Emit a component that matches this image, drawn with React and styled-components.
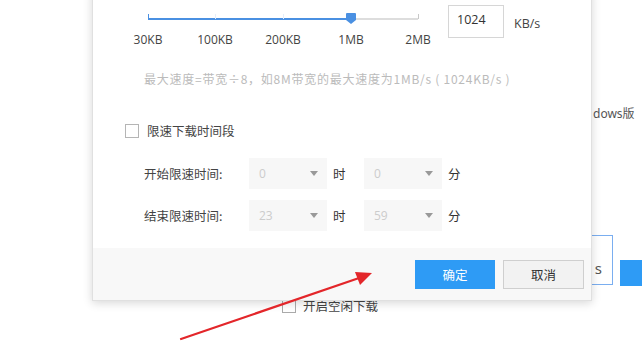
import React from "react";
import styled, { createGlobalStyle } from "styled-components";

const Global = createGlobalStyle`
  html, body { margin: 0; padding: 0; background: #fff; }
  body { width: 642px; height: 354px; overflow: hidden; font-family: "Noto Sans", "Noto Sans CJK SC", sans-serif; }
`;

const Page = styled.div`
  position: relative;
  width: 642px;
  height: 354px;
  background: #fff;
  overflow: hidden;
`;

const BgText = styled.div`
  position: absolute;
  left: ${(p) => p.x}px;
  top: ${(p) => p.y}px;
  font-size: 12px;
  color: #555;
  font-family: "Noto Sans", "Noto Sans CJK SC", sans-serif;
  white-space: nowrap;
`;

const BgBox = styled.div`
  position: absolute;
  left: 560px;
  top: 235px;
  width: 53px;
  height: 50px;
  border: 1px solid #7aaef0;
  box-sizing: border-box;
  display: flex;
  align-items: flex-end;
  justify-content: flex-end;
  padding: 0 10px 6px 0;
  font-size: 15px;
  color: #555;
`;

const BgButton = styled.div`
  position: absolute;
  left: 620px;
  top: 260px;
  width: 40px;
  height: 26px;
  background: #2e9bf5;
`;

const BgCheck = styled.div`
  position: absolute;
  left: 282px;
  top: 296px;
  display: flex;
  align-items: center;
  gap: 7px;
  font-size: 12.5px;
  color: #444;
  font-family: "Noto Sans CJK SC", sans-serif;
`;

const BgBox2 = styled.span`
  width: 12px;
  height: 12px;
  border: 1px solid #aaa;
  background: #fff;
`;

const Dialog = styled.div`
  position: absolute;
  left: 92px;
  top: -10px;
  width: 500px;
  height: 311px;
  background: #fff;
  border: 1px solid #e0e0e0;
  box-sizing: border-box;
  box-shadow: 0 2px 9px rgba(0, 0, 0, 0.16);
  display: flex;
  flex-direction: column;
  z-index: 2;
`;

const Body = styled.div`
  flex: 1;
  display: flex;
  flex-direction: column;
  padding: 14px 0 0 0;
`;

const SliderRow = styled.div`
  display: flex;
  align-items: flex-start;
  padding-left: 38px;
`;

const SliderWrap = styled.div`
  position: relative;
  width: 304px;
  height: 44px;
`;

const Track = styled.div`
  position: absolute;
  left: 17px;
  top: 13px;
  width: 270px;
  height: 2px;
  background: #ddd;
`;

const Fill = styled.div`
  position: absolute;
  left: 0;
  top: 0;
  height: 2px;
  background: #4a90e2;
`;

const Tick = styled.div`
  position: absolute;
  top: -4px;
  width: 1px;
  height: 5px;
  background: ${(p) => p.color};
`;

const Thumb = styled.svg`
  position: absolute;
  top: -6px;
  width: 12px;
  height: 13px;
  margin-left: -6px;
`;

const Label = styled.span`
  position: absolute;
  top: 26px;
  transform: translateX(-50%);
  font-size: 12px;
  color: #444;
  font-family: "Open Sans", "Noto Sans", sans-serif;
  white-space: nowrap;
`;

const NumInput = styled.div`
  margin-left: 13px;
  width: 56px;
  height: 33px;
  box-sizing: border-box;
  border: 1px solid #d6d6d6;
  padding: 5px 0 0 8px;
  font-size: 12.5px;
  color: #333;
  font-family: "Open Sans", "Noto Sans", sans-serif;
`;

const Unit = styled.span`
  margin-left: 10px;
  margin-top: 10px;
  font-size: 12.5px;
  color: #444;
  font-family: "Open Sans", "Noto Sans", sans-serif;
`;

const Hint = styled.div`
  margin: 21px 0 0 51px;
  font-size: 12px;
  letter-spacing: 0.75px;
  color: #bbb;
  font-family: "Noto Sans CJK SC", sans-serif;
  white-space: nowrap;
`;

const CheckRow = styled.label`
  display: flex;
  align-items: center;
  gap: 8px;
  margin: 34px 0 0 32px;
  font-size: 12.5px;
  color: #444;
  font-family: "Noto Sans CJK SC", sans-serif;
`;

const Box = styled.span`
  width: 12px;
  height: 12px;
  border: 1px solid #b5b5b5;
  background: #fff;
`;

const TimeRows = styled.div`
  display: flex;
  flex-direction: column;
  gap: 11px;
  margin: 18px 0 0 51px;
`;

const TimeRow = styled.div`
  display: flex;
  align-items: center;
`;

const TimeLabel = styled.span`
  width: 105px;
  font-size: 12.5px;
  color: #444;
  font-family: "Noto Sans CJK SC", sans-serif;
`;

const Select = styled.div`
  width: 78px;
  height: 31px;
  box-sizing: border-box;
  background: #f7f7f7;
  display: flex;
  align-items: center;
  justify-content: space-between;
  padding: 0 9px 0 10px;
  font-size: 12px;
  color: #ccc;
  font-family: "Open Sans", "Noto Sans", sans-serif;
`;

const Caret = styled.span`
  width: 0;
  height: 0;
  border-left: 4px solid transparent;
  border-right: 4px solid transparent;
  border-top: 5px solid #999;
`;

const Unit2 = styled.span`
  width: ${(p) => p.w}px;
  padding-left: 6px;
  box-sizing: border-box;
  font-size: 12.5px;
  color: #333;
  font-family: "Noto Sans CJK SC", sans-serif;
`;

const Footer = styled.div`
  height: 52px;
  background: #f8f8f8;
  display: flex;
  align-items: center;
  justify-content: flex-end;
  gap: 8px;
  padding: 0 7px 0 0;
`;

const Btn = styled.button`
  width: ${(p) => (p.primary ? 80 : 81)}px;
  height: 29px;
  box-sizing: border-box;
  border: 1px solid ${(p) => (p.primary ? "#2e9bf5" : "#cfcfcf")};
  background: ${(p) => (p.primary ? "#2e9bf5" : "#f2f2f2")};
  color: ${(p) => (p.primary ? "#fff" : "#333")};
  font-size: 12.5px;
  font-family: "Noto Sans CJK SC", sans-serif;
  padding: 0;
`;

const Arrow = styled.svg`
  position: absolute;
  left: 0;
  top: 0;
  z-index: 3;
  pointer-events: none;
`;

const ticks = [
  { x: 0, c: "#4a90e2" },
  { x: 67, c: "#e4eefb" },
  { x: 135, c: "#e4eefb" },
  { x: 270, c: "#c8c8c8" },
];
const labels = [
  { t: "30KB", x: 0 },
  { t: "100KB", x: 67 },
  { t: "200KB", x: 135 },
  { t: "1MB", x: 203 },
  { t: "2MB", x: 270 },
];

export default function App() {
  return (
    <Page>
      <Global />
      <BgText x={593} y={104}>dows版</BgText>
      <BgBox>s</BgBox>
      <BgButton />
      <BgCheck>
        <BgBox2 />
        开启空闲下载
      </BgCheck>
      <Dialog>
        <Body>
          <SliderRow>
            <SliderWrap>
              <Track>
                <Fill style={{ width: "203px" }} />
                {ticks.map((t, i) => (
                  <Tick key={i} color={t.c} style={{ left: `${t.x}px` }} />
                ))}
                <Thumb viewBox="0 0 12 13" style={{ left: "203px" }}>
                  <path d="M2 1 H10 Q11 1 11 2 V8 L6 12 L1 8 V2 Q1 1 2 1 Z" fill="#4a90e2" />
                </Thumb>
              </Track>
              {labels.map((l) => (
                <Label key={l.t} style={{ left: `${l.x + 17}px` }}>{l.t}</Label>
              ))}
            </SliderWrap>
            <NumInput>1024</NumInput>
            <Unit>KB/s</Unit>
          </SliderRow>
          <Hint>最大速度=带宽÷8，如8M带宽的最大速度为1MB/s ( 1024KB/s )</Hint>
          <CheckRow>
            <Box />
            限速下载时间段
          </CheckRow>
          <TimeRows>
            <TimeRow>
              <TimeLabel>开始限速时间:</TimeLabel>
              <Select>0<Caret /></Select>
              <Unit2 w={37}>时</Unit2>
              <Select>0<Caret /></Select>
              <Unit2 w={30}>分</Unit2>
            </TimeRow>
            <TimeRow>
              <TimeLabel>结束限速时间:</TimeLabel>
              <Select>23<Caret /></Select>
              <Unit2 w={37}>时</Unit2>
              <Select>59<Caret /></Select>
              <Unit2 w={30}>分</Unit2>
            </TimeRow>
          </TimeRows>
        </Body>
        <Footer>
          <Btn primary>确定</Btn>
          <Btn>取消</Btn>
        </Footer>
      </Dialog>
      <Arrow width="642" height="354" viewBox="0 0 642 354">
        <line x1="181" y1="339" x2="362" y2="277" stroke="#e3262a" strokeWidth="2.2" strokeLinecap="round" />
        <path d="M372 273 L355 272 L360 285 Z" fill="#e3262a" />
      </Arrow>
    </Page>
  );
}
